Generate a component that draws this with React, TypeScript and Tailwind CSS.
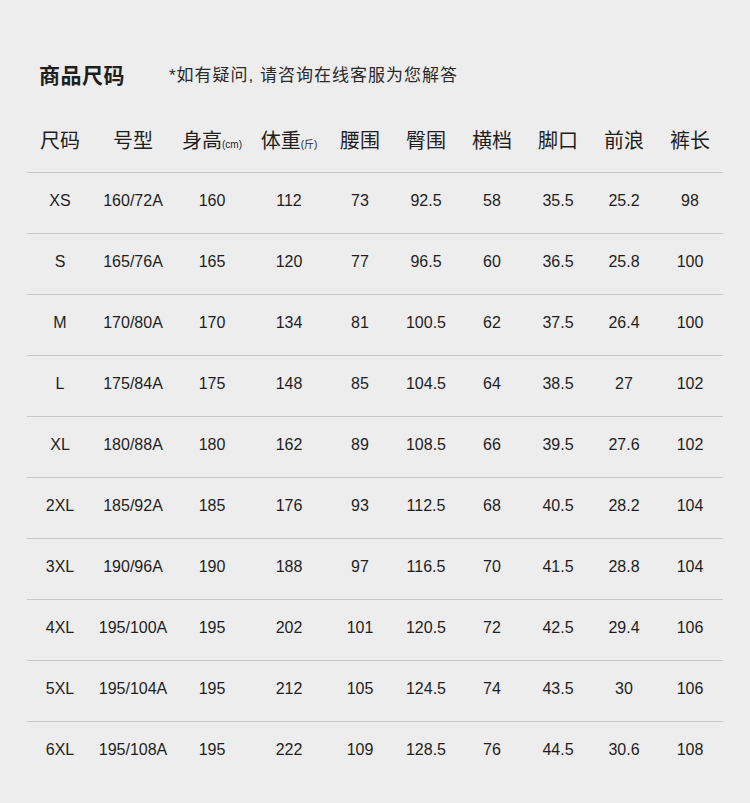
const cols = [
  "w-[66px]",
  "w-[80px]",
  "w-[78px]",
  "w-[76px]",
  "w-[66px]",
  "w-[66px]",
  "w-[66px]",
  "w-[66px]",
  "w-[66px]",
  "w-[66px]",
];

const rows = [
  ["XS", "160/72A", "160", "112", "73", "92.5", "58", "35.5", "25.2", "98"],
  ["S", "165/76A", "165", "120", "77", "96.5", "60", "36.5", "25.8", "100"],
  ["M", "170/80A", "170", "134", "81", "100.5", "62", "37.5", "26.4", "100"],
  ["L", "175/84A", "175", "148", "85", "104.5", "64", "38.5", "27", "102"],
  ["XL", "180/88A", "180", "162", "89", "108.5", "66", "39.5", "27.6", "102"],
  ["2XL", "185/92A", "185", "176", "93", "112.5", "68", "40.5", "28.2", "104"],
  ["3XL", "190/96A", "190", "188", "97", "116.5", "70", "41.5", "28.8", "104"],
  ["4XL", "195/100A", "195", "202", "101", "120.5", "72", "42.5", "29.4", "106"],
  ["5XL", "195/104A", "195", "212", "105", "124.5", "74", "43.5", "30", "106"],
  ["6XL", "195/108A", "195", "222", "109", "128.5", "76", "44.5", "30.6", "108"],
];

const heads: [string, string?][] = [
  ["尺码"],
  ["号型"],
  ["身高", "(cm)"],
  ["体重", "(斤)"],
  ["腰围"],
  ["臀围"],
  ["横档"],
  ["脚口"],
  ["前浪"],
  ["裤长"],
];

export default function App() {
  return (
    <div
      className="w-[750px] h-[803px] bg-[#ededed] text-[#1e1e1e] overflow-hidden"
      style={{ fontFamily: '"Liberation Sans", Arial, "Noto Sans CJK SC", sans-serif' }}
    >
      {/* title */}
      <div className="flex items-center pt-[63px] pl-[39px] h-[89px]">
        <h1 className="text-[21px] leading-[26px] font-bold tracking-[0.5px]">商品尺码</h1>
        <p className="ml-[44px] text-[17px] leading-[26px] tracking-[1px] text-[#2a2a2a]">*如有疑问, 请咨询在线客服为您解答</p>
      </div>

      {/* table */}
      <div className="ml-[27px] w-[696px] mt-[25px]">
        <div className="flex items-center h-[58px] pb-[4px]">
          {heads.map(([t, u], i) => (
            <div key={i} className={`${cols[i]} flex items-baseline justify-center text-[20px] leading-[26px]`}>
              {t}
              {u && <span className="text-[10px] leading-[12px]">{u}</span>}
            </div>
          ))}
        </div>
        {rows.map((r, ri) => (
          <div key={ri} className="flex items-center h-[61px] border-t border-[#c9c9c9] pb-[4px]">
            {r.map((c, ci) => (
              <div key={ci} className={`${cols[ci]} text-center text-[16px] leading-[22px]`}>
                {c}
              </div>
            ))}
          </div>
        ))}
      </div>
    </div>
  );
}
